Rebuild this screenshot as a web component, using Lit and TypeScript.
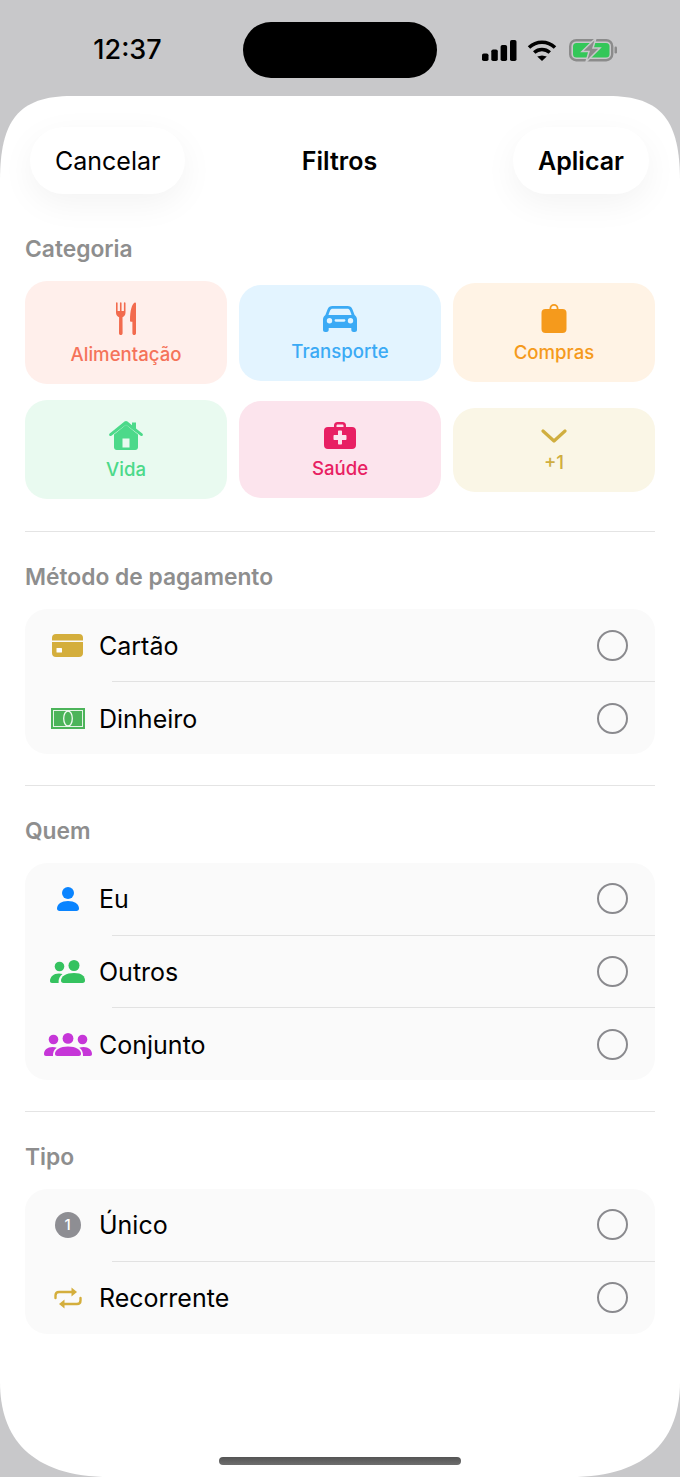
import { LitElement, html, css } from "lit";
import { customElement } from "lit/decorators.js";

const radio = html`<span class="radio"></span>`;

const icons = {
  fork: html`<svg width="20" height="33" viewBox="0 0 20 33" fill="#f26b4e"><path d="M0 1c0-.9 1.600-.9 1.600 0v8h2.350V1c0-.9 1.600-.9 1.600 0v8H7.900V1c0-.9 1.600-.9 1.600 0v9.500c0 2.600-1.300 4-3 4.700l.1 16c0 1-.8 1.800-1.850 1.800S3 32.200 3 31.200l.1-16C1.300 14.500 0 13.100 0 10.500z"/><path d="M20 1.500c0-.8-.5-1.200-1.200-1C16 2 14 8 14 18.500c0 .8.500 1.300 1.200 1.300h1.200v11.400c0 1 .8 1.800 1.800 1.800s1.800-.8 1.800-1.800z"/></svg>`,
  car: html`<svg width="34" height="26" viewBox="0 0 34 26" fill="#3baaf5"><path fill-rule="evenodd" d="M9.500 0h15c2.400 0 4 1 5 3.400L31.600 9c1.500 1.100 2.400 2.700 2.400 4.700v10c0 1.300-.9 2.300-2.200 2.300h-1.300c-1.200 0-2.200-1-2.200-2.300v-1.700H5.700v1.700c0 1.300-1 2.300-2.200 2.300H2.200C.9 26 0 25 0 23.700v-10c0-2 .9-3.600 2.400-4.700l2.100-5.600C5.500 1 7.100 0 9.500 0zM9.700 2.700c-1.300 0-2.100.6-2.600 1.800L5.500 8.600c-.1.300.1.500.4.500h22.200c.3 0 .5-.2.400-.5l-1.600-4.100c-.5-1.200-1.300-1.800-2.600-1.800zM6.500 12a2.700 2.700 0 1 0 0 5.400 2.700 2.700 0 0 0 0-5.400zm21 0a2.700 2.700 0 1 0 0 5.400 2.700 2.700 0 0 0 0-5.400zM12.800 13.300c-.7 0-1.200.5-1.200 1.200s.5 1.200 1.200 1.200h8.400c.7 0 1.200-.5 1.200-1.200s-.5-1.200-1.200-1.200z"/></svg>`,
  bag: html`<svg width="26" height="29" viewBox="0 0 26 29" fill="#f59a1c"><path d="M8.500 6V4.500a4.500 4.500 0 0 1 9 0V6h-1.800V4.500a2.700 2.700 0 0 0-5.400 0V6z"/><rect x="0.500" y="5" width="25" height="24" rx="4"/></svg>`,
  house: html`<svg width="34" height="29" viewBox="0 0 34 29" fill="#4cd98a"><path fill-rule="evenodd" d="M5 13.500 17 3.800l12 9.700v12.700c0 1.600-1.100 2.800-2.800 2.800H7.800C6.100 29 5 27.800 5 26.200zM13.500 17.500v9h7v-9z"/><path d="M17 0c.6 0 1 .2 1.500.6l4.500 3.600V1.500h4v6l6.300 5c.6.500.8 1.300.3 2-.5.600-1.400.7-2 .2L17 3.700 2.400 14.700c-.6.500-1.500.4-2-.2-.5-.7-.3-1.500.3-2L15.500.6C16 .2 16.400 0 17 0z"/></svg>`,
  kit: html`<svg width="32" height="27" viewBox="0 0 32 27" fill="#e81f63"><path fill-rule="evenodd" d="M10 5V3.500C10 1.300 11.300 0 13.500 0h5C20.700 0 22 1.300 22 3.500V5h6c2.600 0 4 1.400 4 4v14c0 2.600-1.400 4-4 4H4c-2.600 0-4-1.400-4-4V9c0-2.600 1.400-4 4-4zM12.500 5h7V3.800c0-.8-.5-1.300-1.300-1.300h-4.400c-.8 0-1.300.5-1.300 1.300zM14 9.500v3.500h-3.500c-.6 0-1 .4-1 1v3c0 .6.4 1 1 1H14v3.500c0 .6.400 1 1 1h2c.6 0 1-.4 1-1V18h3.500c.6 0 1-.4 1-1v-3c0-.6-.4-1-1-1H18V9.500c0-.6-.4-1-1-1h-2c-.6 0-1 .4-1 1z"/></svg>`,
  chev: html`<svg width="26" height="14" viewBox="0 0 26 14" fill="none" stroke="#d0ae3f" stroke-width="3.200" stroke-linecap="round" stroke-linejoin="round"><path d="M2 2l11 10L24 2"/></svg>`,
  card: html`<svg width="31" height="23" viewBox="0 0 31 23"><path d="M0 6.500V4C0 1.400 1.400 0 4 0h23c2.600 0 4 1.400 4 4v2.500z" fill="#d4ae3c"/><path d="M0 8h31v11c0 2.600-1.400 4-4 4H4c-2.600 0-4-1.400-4-4z" fill="#d4ae3c"/><rect x="4.500" y="14" width="5.500" height="4.500" rx=".6" fill="#fff"/></svg>`,
  cash: html`<svg width="34" height="21" viewBox="0 0 34 21"><rect width="34" height="21" fill="#4cb45a"/><rect x="2.500" y="2.500" width="29" height="16" fill="none" stroke="#e4f4e6" stroke-width="1"/><ellipse cx="17" cy="10.500" rx="4.300" ry="7.500" fill="none" stroke="#f2faf3" stroke-width="1.300"/></svg>`,
  person: html`<svg width="22" height="24" viewBox="0 0 22 24" fill="#0a84ff"><circle cx="11" cy="6" r="6"/><path d="M0 21.500C0 17 4.500 14 11 14s11 3 11 7.500c0 1.600-1 2.500-2.500 2.500h-17C1 24 0 23.100 0 21.500z"/></svg>`,
  people: html`<svg width="35" height="23" viewBox="0 0 35 23" fill="#35c25f"><circle cx="9.500" cy="6.500" r="4.800"/><circle cx="24" cy="5.500" r="5.500"/><path d="M0 21c0-4 3.500-7.500 9-7.500 1.300 0 2.500.2 3.500.6C9.800 16 8.300 19 8.600 23H2c-1.300 0-2-.8-2-2z"/><path d="M11 20.500c0-4 5-7.500 13-7.500s11 3.500 11 7.500c0 1.600-.8 2.500-2.500 2.500h-19c-1.700 0-2.500-.9-2.500-2.500z"/></svg>`,
  group: html`<svg width="48" height="23" viewBox="0 0 48 23" fill="#c636d8"><circle cx="9.500" cy="6.500" r="4.800"/><circle cx="24" cy="5.400" r="5.400"/><circle cx="38.500" cy="6.500" r="4.800"/><path d="M0 21c0-3.800 3.300-7 8.500-7 1.600 0 3 .3 4.200.8C10 16.500 8.800 19.500 9 23H2c-1.300 0-2-.8-2-2z"/><path d="M48 21c0-3.800-3.300-7-8.500-7-1.600 0-3 .3-4.200.8C38 16.500 39.200 19.500 39 23h7c1.300 0 2-.8 2-2z"/><path d="M11 20.800c0-4 5-7.300 13-7.300s13 3.300 13 7.300c0 1.500-.8 2.200-2.300 2.200H13.300c-1.500 0-2.300-.7-2.300-2.200z"/></svg>`,
  one: html`<span class="one">1</span>`,
  repeat: html`<svg width="28" height="22" viewBox="0 0 28 22" fill="none" stroke="#d4ae3c" stroke-width="2.400" stroke-linecap="round"><path d="M1.500 11V8.500c0-2 1.400-3.500 3.500-3.500h13"/><path d="M26.500 11v2.500c0 2-1.400 3.500-3.500 3.500H10"/><path d="M17.500 0.500 23 5l-5.500 4.500z" fill="#d4ae3c" stroke="none"/><path d="M10.500 12.500 5 17l5.500 4.500z" fill="#d4ae3c" stroke="none"/></svg>`,
};

const tiles = [
  { name: "Alimentação", cls: "t-food", icon: icons.fork },
  { name: "Transporte", cls: "t-car", icon: icons.car },
  { name: "Compras", cls: "t-shop", icon: icons.bag },
  { name: "Vida", cls: "t-life", icon: icons.house },
  { name: "Saúde", cls: "t-health", icon: icons.kit },
  { name: "+1", cls: "t-more", icon: icons.chev },
];

const groups = [
  { title: "Método de pagamento", cls: "", rows: [["Cartão", icons.card], ["Dinheiro", icons.cash]] },
  { title: "Quem", cls: "c3", rows: [["Eu", icons.person], ["Outros", icons.people], ["Conjunto", icons.group]] },
  { title: "Tipo", cls: "c2", rows: [["Único", icons.one], ["Recorrente", icons.repeat]] },
];

@customElement("app-root")
export class AppRoot extends LitElement {
  static styles = css`
    :host {
      display: flex;
      flex-direction: column;
      width: 680px;
      height: 1477px;
      background: #c8c8ca;
      font-family: Inter, "Liberation Sans", sans-serif;
      color: #000;
      overflow: hidden;
    }
    .status {
      height: 96px;
      flex: none;
      display: grid;
      grid-template-columns: 243px 194px 1fr;
      align-items: start;
    }
    .time {
      font-size: 27px;
      font-weight: 550;
      line-height: 32px;
      margin-top: 34px;
      text-align: center;
      padding-left: 12px;
    }
    .island {
      margin-top: 22px;
      height: 56px;
      border-radius: 28px;
      background: #000;
    }
    .sys {
      display: flex;
      align-items: center;
      margin-top: 39px;
      padding-left: 45px;
      height: 22px;
    }
    .sys svg { display: block; }
    .wifi { margin-left: 10px; }
    .batt { margin-left: 12px; }
    .sheet {
      flex: 1;
      background: #fff;
      clip-path: path("M0 85C0 25 18 0 72 0H608C662 0 680 25 680 85V1286C680 1341 650 1381 570 1381H110C30 1381 0 1341 0 1286Z");
      display: flex;
      flex-direction: column;
      min-height: 0;
    }
    .head {
      display: grid;
      grid-template-columns: 1fr auto 1fr;
      align-items: center;
      padding: 31px 31px 0 30px;
    }
    .pill {
      height: 67px;
      display: flex;
      align-items: center;
      border-radius: 34px;
      padding: 0 25px;
      background: #fff;
      box-shadow: 0 10px 34px rgba(0, 0, 0, 0.05);
      font-size: 25px;
    }
    .pill.l { justify-self: start; }
    .pill.r { justify-self: end; font-weight: 600; }
    .title { font-size: 25px; font-weight: 600; }
    .body {
      padding: 42px 25px 0;
      display: flex;
      flex-direction: column;
    }
    .label {
      font-size: 22.800px;
      line-height: 26px;
      font-weight: 600;
      color: #8e8e8e;
      margin-bottom: 19px;
    }
    .tiles {
      display: grid;
      grid-template-columns: repeat(3, 1fr);
      gap: 16px 12px;
      align-items: center;
    }
    .tile {
      display: flex;
      flex-direction: column;
      align-items: center;
      gap: 8px;
      padding: 21px 0 19px;
      border-radius: 22px;
      font-size: 18.600px;
      line-height: 22px;
      font-weight: 450;
    }
    .tile svg { display: block; }
    .t-food { background: #ffefeb; color: #f5735a; }
    .t-car { background: #e3f4ff; color: #3baaf5; }
    .t-shop { background: #fff3e5; color: #f59a1c; }
    .t-life { background: #e9faf0; color: #4cd98a; }
    .t-health { background: #fce4ed; color: #e81f63; }
    .t-more { background: #faf6e6; color: #d0ae3f; }
    .rule {
      height: 1px;
      background: #e4e4e4;
      margin: 32px 0;
      flex: none;
    }
    .card {
      background: #fafafa;
      border-radius: 22px;
      height: 145px;
      display: flex;
      flex-direction: column;
    }
    .card.c3 { height: 217px; }
    .card.c2 { height: 145px; margin-top: -0.5px; }
    .rule.tight { margin-top: 31px; }
    .row {
      flex: 1;
      display: flex;
      align-items: center;
      padding: 0 27px 0 18px;
      font-size: 25px;
    }
    .sep {
      height: 1px;
      background: #e2e2e2;
      margin-left: 87px;
      flex: none;
    }
    .ic {
      width: 49px;
      margin-right: 7px;
      display: flex;
      justify-content: center;
      align-items: center;
      flex: none;
    }
    .ic svg { display: block; }
    .name { flex: 1; margin-top: 1px; }
    .radio {
      width: 31px;
      height: 31px;
      box-sizing: border-box;
      border: 2px solid #8a8a8e;
      border-radius: 50%;
      flex: none;
    }
    .one {
      width: 26px;
      height: 26px;
      border-radius: 50%;
      background: #8e8e93;
      color: #fff;
      font-size: 15px;
      font-weight: 500;
      display: flex;
      align-items: center;
      justify-content: center;
    }
    .spacer { flex: 1; }
    .home {
      width: 242px;
      height: 8px;
      border-radius: 4px;
      background: linear-gradient(#545454, #6e6e6e);
      align-self: center;
      margin-bottom: 12px;
    }
  `;

  render() {
    return html`
      <div class="status">
        <div class="time">12:37</div>
        <div class="island"></div>
        <div class="sys">
          <svg width="35" height="21" viewBox="0 0 35 21" fill="#000">
            <rect x="0" y="13.500" width="6.500" height="7.500" rx="1.800"/>
            <rect x="9.300" y="9.500" width="6.500" height="11.500" rx="1.800"/>
            <rect x="18.600" y="5" width="6.500" height="16" rx="1.800"/>
            <rect x="28" y="0" width="6.500" height="21" rx="1.800"/>
          </svg>
          <svg class="wifi" width="30" height="21" viewBox="0 0 30 21" fill="none" stroke="#000" stroke-width="3.600">
            <path d="M2 7.500C9.500 .5 20.500 .5 28 7.500"/>
            <path d="M7.200 12.500c4.500-4 11-4 15.600 0"/>
            <path d="M15 15.500l4.800 1-4.800 4.500-4.800-4.500z" fill="#000" stroke="none"/>
          </svg>
          <svg class="batt" width="49" height="24" viewBox="0 0 49 24">
            <rect x="1.200" y="2.200" width="42" height="20" rx="6" fill="none" stroke="#8b8b8b" stroke-width="2.400"/>
            <rect x="4" y="5" width="36.500" height="14.500" rx="3.500" fill="#34c759"/>
            <rect x="45.500" y="8.500" width="2.500" height="7" rx="1.200" fill="#8b8b8b"/>
            <path d="M27 0 13 13.500h7L17 24 31 10h-7z" fill="#8b8b8b" stroke="#c8c8ca" stroke-width="1.500"/>
          </svg>
        </div>
      </div>
      <div class="sheet">
        <div class="head">
          <div class="pill l">Cancelar</div>
          <div class="title">Filtros</div>
          <div class="pill r">Aplicar</div>
        </div>
        <div class="body">
          <div class="label">Categoria</div>
          <div class="tiles">
            ${tiles.map((t) => html`<div class="tile ${t.cls}">${t.icon}<span>${t.name}</span></div>`)}
          </div>
          ${groups.map(
            (g) => html`
              <div class="rule ${g.cls ? "tight" : ""}"></div>
              <div class="label">${g.title}</div>
              <div class="card ${g.cls}">
                ${g.rows.map(
                  (r, i) => html`
                    ${i > 0 ? html`<div class="sep"></div>` : ""}
                    <div class="row">
                      <span class="ic">${r[1]}</span>
                      <span class="name">${r[0]}</span>
                      ${radio}
                    </div>
                  `
                )}
              </div>
            `
          )}
        </div>
        <div class="spacer"></div>
        <div class="home"></div>
      </div>
    `;
  }
}
